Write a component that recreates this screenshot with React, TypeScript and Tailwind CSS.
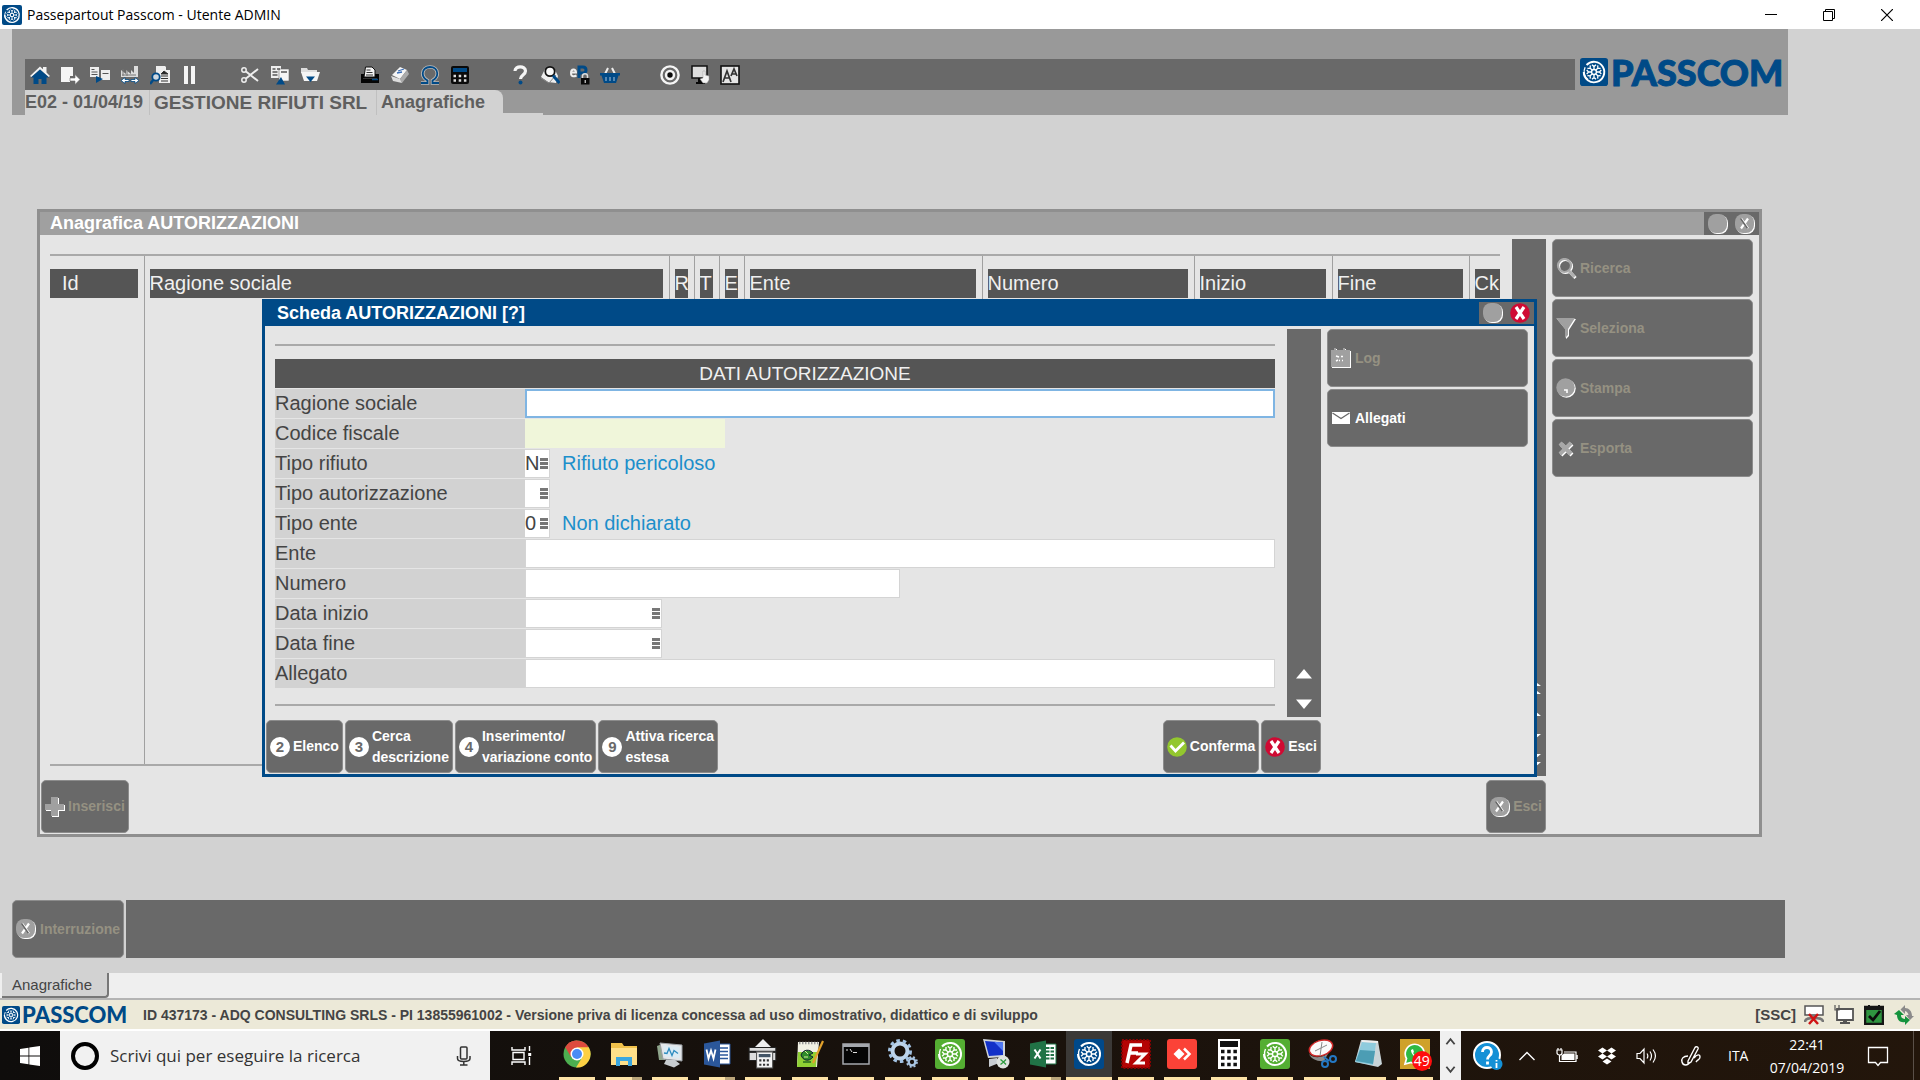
import React from "react";

type IconProps = { children: React.ReactNode; size?: number; className?: string; box?: string };

function Svg({ children, size = 20, className = "", box = "0 0 20 20" }: IconProps) {
  return (
    <svg width={size} height={size} viewBox={box} className={"shrink-0 " + className} aria-hidden="true" fill="none">
      {children}
    </svg>
  );
}

const BLUE = "#004a87";

function Wheel({ size, color = BLUE, radius = 3 }: { size: number; color?: string; radius?: number }) {
  const spokes = [0, 45, 90, 135, 180, 225, 270, 315];
  return (
    <Svg size={size} box="0 0 30 30">
      <rect width="30" height="30" rx={radius} fill={color} />
      <path d="M7 7.5A11 11 0 1 1 4 15" stroke="#fff" strokeWidth="2" />
      <path d="M5.500 10a10.500 10.500 0 0 0 3 13" stroke="#fff" strokeWidth="1.400" />
      <circle cx="15" cy="15" r="2.600" stroke="#fff" strokeWidth="1.500" />
      {spokes.map((a) => (
        <g key={a} transform={`rotate(${a} 15 15)`}>
          <path d="M15 12V8.500M12.800 7.200L15 9.200L17.200 7.200" stroke="#fff" strokeWidth="1.400" />
        </g>
      ))}
    </Svg>
  );
}

/* ---------- toolbar ---------- */

const toolbar: ([string, React.ReactNode] | null)[] = [
  ["Home", <><path d="M0 11L10 1.500L13 4.300V2h3.500v5.500L20 11l-1.500 1L10 4.500L1.500 12z" fill="#f2f2f2" /><path d="M10 4.500L1 12.500h2.500V19h5v-5h3v5h5v-6.500H19z" fill={BLUE} /></>],
  ["Esci", <><path d="M1 2h12v9h-3v6H1z" fill="#f5f5f5" /><path d="M10 13h5V9.500l5 5-5 5V16h-5z" fill="#fff" stroke="#696969" strokeWidth=".6" /></>],
  ["Copia", <><path d="M0 2h9v10H0z" fill="#eee" /><path d="M11 5h9v10h-9z" fill="#eee" /><path d="M1.500 4.500h3M1.500 7h6M1.500 9.500h6M12.500 8.500h6" stroke="#555" /><path d="M6 11l7 3-7 4z" fill={BLUE} /></>],
  ["Azienda", <><path d="M1 12V5l5 4V5l5 4V5l3 3V1h4v11z" fill="#ddd" /><path d="M2 10h14M3 4v7M7 5v6" stroke="#777" /><path d="M1 15.500l4-3v2h4v2H5v2zM19 15.500l-4-3v2h-4v2h4v2z" fill="#fff" stroke={BLUE} strokeWidth=".8" /></>],
  ["Cerca documento", <><path d="M6 1h9l1 1v3h4v13H9V15H6z" fill="#eee" /><path d="M11 9l3-3 4 3zM11 11h7M11 13.500h7M11 16h7" stroke="#333" fill="#222" /><circle cx="6" cy="12" r="3.700" stroke={BLUE} strokeWidth="1.800" fill="#cfd8e0" /><path d="M3.500 14.500L0 19" stroke={BLUE} strokeWidth="2.500" /></>],
  ["Pausa", <path d="M4 1h4v18H4zM11 1h4v18h-4z" fill="#f5f5f5" />],
  null,
  ["Taglia", <><circle cx="4" cy="5" r="2.200" stroke="#eee" strokeWidth="1.500" /><circle cx="4" cy="15" r="2.200" stroke="#eee" strokeWidth="1.500" /><path d="M6 6.500L18 16M6 13.500L18 4" stroke="#eee" strokeWidth="2" /></>],
  ["Copia tutto", <><path d="M1 1h10v12H1z" fill="#eee" /><path d="M9 4h10v12H9z" fill="#f5f5f5" stroke="#696969" strokeWidth=".6" /><path d="M2.500 4h3M7 4h3M2.500 7h5M2.500 10h5M11 7h6" stroke="#555" strokeWidth="1.300" /><path d="M6 19.500L11 12l4 7.500z" fill={BLUE} /></>],
  ["Apri", <><path d="M1 3h6l1 2h9v3H1z" fill="#ddd" /><path d="M1 7h19l-3 9H4z" fill="#f5f5f5" /><path d="M6 11.500h9L10.500 17z" fill={BLUE} /></>],
  null,
  ["Stampa", <><path d="M1 9h18v9H1z" fill="#050505" /><path d="M4 12L5.500 2H12l3 3v7z" fill="#f5f5f5" stroke="#111" /><path d="M6.500 5h4M6.500 7.500h6M6 10h7" stroke="#333" /><path d="M3 13.500h14" stroke="#333" /><path d="M12 14.500h6" stroke={BLUE} strokeWidth="1.500" /></>],
  ["Gomma", <><path d="M2 10L10 2l7 3-7 9z" fill="#f5f5f5" /><path d="M10 14l7-9 2 4-7 9z" fill="#aaa" /><path d="M1 11l9 3 2 4-9-2z" fill="#ddd" /><path d="M8 6l6-2M7 8l5-1" stroke="#3b6db5" strokeWidth="1.300" /></>],
  ["Simboli", <><path d="M1 18h6.500v-2.500C4 13.500 2.700 11.500 2.700 8.500C2.700 4.500 5.800 2 10 2s7.300 2.500 7.300 6.500c0 3-1.300 5-4.800 7V18H19" stroke="#fff" strokeWidth="3.600" opacity=".55" /><path d="M1 18h6.500v-2.500C4 13.500 2.700 11.500 2.700 8.500C2.700 4.500 5.800 2 10 2s7.300 2.500 7.300 6.500c0 3-1.300 5-4.800 7V18H19" stroke={BLUE} strokeWidth="1.800" /></>],
  ["Calcolatrice", <><rect x="1" y="1" width="18" height="18" rx="2" fill="#0a0a0a" /><path d="M3 3h14v4H3z" fill={BLUE} /><path d="M3.500 11h13M3.500 15.500h13" stroke="#ddd" strokeWidth="2.500" strokeDasharray="2.500 2.700" /></>],
  null,
  ["Aiuto", <><path d="M5 6C5 .500 15.500 .500 15.500 6c0 4-5 4-5 8" stroke="#f5f5f5" strokeWidth="3.200" /><circle cx="10.500" cy="17.500" r="2" fill={BLUE} /></>],
  ["Ricerca", <><path d="M1 12l4-8 10 1 3 6-2 7-8-1z" fill="#eee" /><path d="M1 13l8 5 7-8" stroke="#888" /><circle cx="10" cy="6.500" r="4.700" fill="#f8f8f8" stroke="#111" strokeWidth="1.800" /><path d="M13 10.500L19.500 18" stroke={BLUE} strokeWidth="3" /></>],
  ["ePass", <><path d="M1 7.500h5C6 3.500 1 3.500 1 8s3.500 3.500 5.500 2.500" stroke="#eee" strokeWidth="2" /><path d="M9 13V2h4c4 0 4 6 0 6h-3" stroke={BLUE} strokeWidth="3" /><path d="M12.500 13V11c0-3 5-3 5 0v2" stroke="#ddd" strokeWidth="1.500" /><path d="M11 13h8.500v6.500H11z" fill="#080808" /><path d="M15.200 15v3" stroke="#fff" /></>],
  ["Negozio", <><path d="M5 9l3-6M15 9l-3-6" stroke="#eee" strokeWidth="2" /><path d="M0 8h20v2.500h-1.500L16 18H4L1.500 10.500H0z" fill={BLUE} /><path d="M6 12v4M10 12v4M14 12v4" stroke="#aac4dd" /></>],
  null,
  ["Obiettivo", <><circle cx="10" cy="10" r="9.800" fill="#f5f5f5" /><circle cx="10" cy="10" r="6.300" fill="#f5f5f5" stroke="#696969" strokeWidth="2.200" /><circle cx="10" cy="10" r="2.700" fill="#0a0a0a" /></>],
  ["Schermo", <><path d="M2 1h15v12H2z" fill="#ddd" stroke="#111" strokeWidth="1.500" /><path d="M8 13h4v4h3v2H6v-2h2z" fill="#080808" /><path d="M13 6h2v4l4 1v4l-2 3h-4l-3-4 3-1z" fill="#f5f5f5" stroke="#999" strokeWidth=".5" /></>],
  ["Carattere", <><rect x="1" y="1" width="18" height="18" fill="#e5e5e5" stroke="#111" strokeWidth="1.600" /><path d="M3 17L7 6l4 11M4.500 13h5M11 11l3-7 3 7M12 9h4" stroke="#333" strokeWidth="1.700" /></>],
];

/* ---------- program icons ---------- */

const dis = "drop-shadow-[1px_1px_0_#ffffff]";

function GreyDisc() {
  return <Svg className={dis}><rect width="19" height="19" rx="8" fill="#a0a0a0" /></Svg>;
}
function GreyX() {
  return (
    <Svg className={dis}>
      <rect width="19" height="19" rx="8" fill="#a0a0a0" />
      <path d="M6 4.500l7 10M13 4.500l-7 10" stroke="#fff" strokeWidth="2.200" />
      <path d="M5.500 4.500l7 10" stroke="#666" strokeWidth="1.600" />
    </Svg>
  );
}
function RedX() {
  return (
    <Svg>
      <circle cx="10" cy="10" r="9.800" fill="#cf0a33" />
      <path d="M6 4l8 12M14 4l-8 12" stroke="#fff" strokeWidth="3.200" />
    </Svg>
  );
}
function GreenCheck() {
  return (
    <Svg>
      <circle cx="10" cy="10" r="9.800" fill="#93c72e" />
      <path d="M3.500 8.500l5 5.500 8.500-8.500" stroke="#fff" strokeWidth="2.800" />
    </Svg>
  );
}
function NumberDisc({ n }: { n: string }) {
  return (
    <span className="flex size-5 shrink-0 items-center justify-center rounded-full bg-white text-[15px] leading-5 font-bold text-[#696969]">
      {n}
    </span>
  );
}
const MagIcon = () => <Svg className={dis}><circle cx="8.500" cy="7.500" r="6.500" stroke="#a8a8a8" strokeWidth="2.200" /><path d="M13 13l5.500 6" stroke="#b0b0b0" strokeWidth="3" /></Svg>;
const FunnelIcon = () => <Svg className={dis}><path d="M0 0h19l-7 11v6l-3 3V11z" fill="#a0a0a0" /></Svg>;
const PrintIcon = () => <Svg className={dis}><circle cx="9.500" cy="9.500" r="9.200" fill="#a0a0a0" /><path d="M8 12h3v3" stroke="#fff" strokeWidth="1.600" /></Svg>;
const ExportIcon = () => <Svg className={dis}><path d="M4 5l11 11M15 5L4 16" stroke="#a8a8a8" strokeWidth="4" /></Svg>;
const LogIcon = () => <Svg className={dis}><path d="M0 2h3V0h2v2h7V0h2v2h5v17H0z" fill="#a0a0a0" /><path d="M5 8l3 1M5 13l2-1M10 8.500h2M8 12.500h1M11 12.500h1" stroke="#fff" strokeWidth="1.500" /></Svg>;
const MailIcon = () => <Svg><path d="M1 4h18v12H1z" fill="#fff" /><path d="M1.500 5l8.500 5.500L18.500 5" stroke="#696969" strokeWidth="1.300" /></Svg>;
const PlusIcon = () => <Svg className={dis}><path d="M6 0h7v7h6v6h-6v6H6v-6H0V7h6z" fill="#a0a0a0" /></Svg>;

const btnBase = "flex items-center rounded-[5px] border border-[#8c8c8c] bg-[#696969] text-left text-sm leading-[21px] font-bold whitespace-nowrap ";

function SideButton({ icon, label, enabled = false }: { icon: React.ReactNode; label: string; enabled?: boolean }) {
  return (
    <button type="button" disabled={!enabled} className={btnBase + "h-[58px] w-full gap-1 px-[3px] " + (enabled ? "text-white" : "text-[#959182]")}>
      {icon}
      {label}
    </button>
  );
}

function FootButton({ icon, children, enabled = false }: { icon: React.ReactNode; children: React.ReactNode; enabled?: boolean }) {
  return (
    <button type="button" disabled={!enabled} className={btnBase + "h-[53px] shrink-0 gap-[3px] px-[3px] " + (enabled ? "text-white" : "text-[#959182]")}>
      {icon}
      <span>{children}</span>
    </button>
  );
}

/* ---------- list window ---------- */

const columns: { label: string; width: string; pad?: string }[] = [
  { label: "Id", width: "w-[94px]", pad: "mr-[6px] pl-3" },
  { label: "Ragione sociale", width: "" },
  { label: "R", width: "w-[25px]" },
  { label: "T", width: "w-[25px]" },
  { label: "E", width: "w-[25px]" },
  { label: "Ente", width: "w-[238px]" },
  { label: "Numero", width: "w-[212px]" },
  { label: "Inizio", width: "w-[138px]" },
  { label: "Fine", width: "w-[137px]" },
  { label: "Ck", width: "w-[31px]", pad: "ml-[5px]" },
];

function ListTable() {
  return (
    <table className="w-full table-fixed border-collapse border-y-2 border-[#a9a9a9]">
      <thead>
        <tr>
          {columns.map((c) => (
            <th key={c.label} scope="col" className={"border-r border-[#a0a0a0] p-0 pt-[13px] text-left text-xl font-normal text-[#f0f0f0] last:border-r-0 " + c.width}>
              <div className={"h-[29px] overflow-hidden bg-[#555555] leading-[29px] whitespace-nowrap " + (c.pad ?? "mr-[6px] ml-[5px]")}>{c.label}</div>
            </th>
          ))}
        </tr>
      </thead>
      <tbody>
        <tr className="h-[467px]">
          {columns.map((c) => (
            <td key={c.label} className="border-r border-[#a0a0a0] last:border-r-0" />
          ))}
        </tr>
      </tbody>
    </table>
  );
}

function ListWindow() {
  return (
    <section className="relative mt-[94px] mr-[158px] ml-[37px] border-[3px] border-[#8f8f8f] bg-[#e5e5e5]">
      <header className="flex h-[23px] items-center justify-between bg-[#a0a0a0] pl-[10px]">
        <h1 className="text-lg leading-[23px] font-bold text-white">Anagrafica AUTORIZZAZIONI</h1>
        <div className="flex h-[23px] w-[55px] items-center justify-around bg-[#696969]">
          <button type="button" aria-label="Informazioni" disabled><GreyDisc /></button>
          <button type="button" aria-label="Chiudi" disabled><GreyX /></button>
        </div>
      </header>
      <div className="flex pt-1 pr-[6px]">
        <div className="min-w-0 flex-1">
          <div className="flex">
            <div className="min-w-0 flex-1 pt-[15px] pr-3 pl-[10px]"><ListTable /></div>
            <div className="flex h-[537px] w-[34px] flex-col items-center justify-end bg-[#696969] pb-2">
              <svg width="24" height="88" viewBox="0 0 24 88" fill="#ffffff" aria-hidden="true">
                <path d="M0 6L12-3L24 6zM0 14L12 5L24 14zM0 36L12 26L24 36zM0 54h24L12 64zM0 74h24L12 84zM0 82h24L12 92z" />
              </svg>
            </div>
          </div>
          <div className="flex justify-between pt-1 pb-px pl-px">
            <FootButton icon={<PlusIcon />}>Inserisci</FootButton>
            <FootButton icon={<GreyX />}>Esci</FootButton>
          </div>
        </div>
        <aside className="ml-[6px] flex w-[201px] shrink-0 flex-col gap-[2px]">
          <SideButton icon={<MagIcon />} label="Ricerca" />
          <SideButton icon={<FunnelIcon />} label="Seleziona" />
          <SideButton icon={<PrintIcon />} label="Stampa" />
          <SideButton icon={<ExportIcon />} label="Esporta" />
        </aside>
      </div>
      <Dialog />
    </section>
  );
}

/* ---------- dialog ---------- */

function Lookup({ label }: { label: string }) {
  return (
    <button type="button" aria-label={label} className="mr-px flex h-full w-2 flex-col justify-center gap-px">
      <span className="h-[3px] w-2 bg-[#777777]" />
      <span className="h-[3px] w-2 bg-[#777777]" />
      <span className="h-[3px] w-2 bg-[#777777]" />
    </button>
  );
}

type Field = { id: string; label: string; kind: "full" | "focus" | "code" | "tax" | "half" | "date"; value?: string; note?: string };

const fields: Field[] = [
  { id: "ragione", label: "Ragione sociale", kind: "focus" },
  { id: "cf", label: "Codice fiscale", kind: "tax" },
  { id: "rifiuto", label: "Tipo rifiuto", kind: "code", value: "N", note: "Rifiuto pericoloso" },
  { id: "autorizzazione", label: "Tipo autorizzazione", kind: "code" },
  { id: "tipoente", label: "Tipo ente", kind: "code", value: "0", note: "Non dichiarato" },
  { id: "ente", label: "Ente", kind: "full" },
  { id: "numero", label: "Numero", kind: "half" },
  { id: "inizio", label: "Data inizio", kind: "date" },
  { id: "fine", label: "Data fine", kind: "date" },
  { id: "allegato", label: "Allegato", kind: "full" },
];

const boxStyle = {
  focus: "w-full border-2 border-[#7fb5e3] bg-white",
  full: "w-full border border-[#d4d4d4] bg-white",
  half: "w-1/2 border border-[#d4d4d4] bg-white",
  tax: "w-[200px] bg-[#f0f6da]",
  code: "w-[25px] border border-l-0 border-[#d4d4d4] bg-white",
  date: "w-[137px] border border-[#d4d4d4] bg-white",
};

function FormRow({ f }: { f: Field }) {
  const lookup = f.kind === "code" || f.kind === "date";
  return (
    <div className="mt-px flex h-[29px]">
      <label htmlFor={f.id} className="w-[250px] shrink-0 bg-[#d2d2d2] leading-[29px] text-[#444444]">{f.label}</label>
      <div className="flex min-w-0 flex-1">
        <div className={"flex h-full overflow-hidden " + boxStyle[f.kind]}>
          <input id={f.id} type="text" defaultValue={f.value} className="h-full min-w-0 flex-1 text-[#444444] outline-none" />
          {lookup && <Lookup label={"Elenco " + f.label} />}
        </div>
        {f.note && <span className="ml-3 leading-[29px] text-[#1c8fcb]">{f.note}</span>}
      </div>
    </div>
  );
}

function Dialog() {
  return (
    <section role="dialog" aria-label="Scheda AUTORIZZAZIONI" className="absolute top-[87px] right-[222px] left-[222px] border-[3px] border-[#004a87] bg-[#e5e5e5]">
      <header className="flex h-6 items-start justify-between bg-[#004a87] pl-3">
        <h2 className="text-lg leading-[22px] font-bold text-white">Scheda AUTORIZZAZIONI [?]</h2>
        <div className="flex h-[22px] w-[55px] items-center justify-around bg-[#696969]">
          <button type="button" aria-label="Informazioni"><GreyDisc /></button>
          <button type="button" aria-label="Chiudi scheda"><RedX /></button>
        </div>
      </header>
      <div className="flex pt-[3px] pr-[6px]">
        <div className="min-w-0 flex-1">
          <div className="flex">
            <form className="min-w-0 flex-1 pt-[15px] pr-3 pl-[10px] text-xl" onSubmit={(e) => e.preventDefault()}>
              <div className="border-y-2 border-[#a9a9a9] pt-[13px] pb-4">
                <h3 className="h-[29px] bg-[#555555] pl-[60px] text-center text-[19px] leading-[29px] text-[#f0f0f0]">DATI AUTORIZZAZIONE</h3>
                {fields.map((f) => <FormRow key={f.id} f={f} />)}
              </div>
            </form>
            <div className="flex h-[388px] w-[34px] flex-col items-center justify-end gap-5 bg-[#696969] pb-2">
              <button type="button" aria-label="Scorri su"><svg width="16" height="10" viewBox="0 0 16 10"><path d="M0 9.500L8 0l8 9.500z" fill="#fff" /></svg></button>
              <button type="button" aria-label="Scorri giù"><svg width="16" height="10" viewBox="0 0 16 10"><path d="M0 .500L8 10l8-9.500z" fill="#fff" /></svg></button>
            </div>
          </div>
          <div className="flex gap-[2px] pt-[3px] pb-px pl-px">
            <FootButton enabled icon={<NumberDisc n="2" />}>Elenco</FootButton>
            <FootButton enabled icon={<NumberDisc n="3" />}>Cerca<br />descrizione</FootButton>
            <FootButton enabled icon={<NumberDisc n="4" />}>Inserimento/<br />variazione conto</FootButton>
            <FootButton enabled icon={<NumberDisc n="9" />}>Attiva ricerca<br />estesa</FootButton>
            <div className="flex-1" />
            <FootButton enabled icon={<GreenCheck />}>Conferma</FootButton>
            <FootButton enabled icon={<RedX />}>Esci</FootButton>
          </div>
        </div>
        <aside className="ml-[6px] flex w-[201px] shrink-0 flex-col gap-[2px]">
          <SideButton icon={<LogIcon />} label="Log" />
          <SideButton icon={<MailIcon />} label="Allegati" enabled />
        </aside>
      </div>
    </section>
  );
}

/* ---------- taskbar ---------- */

type TaskApp = { name: string; icon: React.ReactNode; active?: boolean; multi?: boolean };

const apps: TaskApp[] = [
  { name: "Chrome", icon: <Svg size={28} box="0 0 28 28"><circle cx="14" cy="14" r="13.500" fill="#4caf50" /><path d="M2.300 7.300A13.500 13.500 0 0 1 25.700 7.300L14 14z" fill="#dd4b3e" /><path d="M2.300 7.300A13.500 13.500 0 0 1 14 .500v8L8 17z" fill="#dd4b3e" /><path d="M25.700 7.300H14L19.500 17L13 27.500A13.500 13.500 0 0 0 25.700 7.300z" fill="#fdd043" /><circle cx="14" cy="14" r="6.500" fill="#fff" /><circle cx="14" cy="14" r="5" fill="#4a8cf5" /></Svg> },
  { name: "Esplora file", multi: true, icon: <Svg size={28} box="0 0 28 28"><path d="M1 3h11l2 3h13v19H1z" fill="#f0c14b" /><path d="M1 8h26v17H1z" fill="#ffe08a" /><path d="M6 26v-9h16v9h-4v-5h-8v5z" fill="#3ba7e0" /></Svg> },
  { name: "Gestione attività", icon: <Svg size={28} box="0 0 28 28"><path d="M1 6l8-3v17H3z" fill="#8fa58c" /><path d="M4 3l22 2v16L7 19z" fill="#e3e6e9" stroke="#9a9fa4" /><path d="M7 5.500l16.500 1.500v11L9 16.500z" fill="#dcebf4" /><path d="M8 13l3 .500 2-5 3 7 2-5 4 3" stroke="#2e8cc0" strokeWidth="1.300" /><path d="M10 20h9l5 4-6 3.500-10-3.500z" fill="#c8ccd0" /></Svg> },
  { name: "Word", multi: true, icon: <Svg size={28} box="0 0 28 28"><path d="M14 4h13v20H14z" fill="#fff" stroke="#2b579a" /><path d="M16 8h9M16 11.500h9M16 15h9M16 18.500h9" stroke="#2b579a" strokeWidth="1.600" /><path d="M1 3.500L17 .500v27L1 24.500z" fill="#2b579a" /><path d="M3.500 9.500l2 9 2.500-8 2.500 8 2-9" stroke="#fff" strokeWidth="1.800" /></Svg> },
  { name: "Fax", icon: <Svg size={30} box="0 0 28 28"><path d="M6 8l8-8 8 8z" fill="#eee" stroke="#777" strokeWidth=".6" /><path d="M1 8h25v12H1z" fill="#ddd" stroke="#222" /><path d="M1 12h25" stroke="#222" strokeWidth="2" /><path d="M8 12h15v15H8z" fill="#f4f4f4" stroke="#555" /><path d="M10 14h11v3H10z" fill="#456" /><path d="M10.500 20h10M10.500 24h10" stroke="#333" strokeWidth="2" strokeDasharray="2 1.500" /></Svg> },
  { name: "Notepad++", icon: <Svg size={28} box="0 0 28 28"><path d="M2 2h21l-2 25H1z" fill="#f1f1e4" /><path d="M2 12h19l-1 15H1z" fill="#8fd033" /><path d="M3 3h19" stroke="#999" strokeWidth="2.500" strokeDasharray="1.500 1.500" /><path d="M5 15c2-6 9-6 12-2l-4 2 4 2c-4 5-10 4-12-2z" fill="#2e8b2a" stroke="#123" /><path d="M9 11l3 3M8 17h4" stroke="#d8f0a0" /><path d="M7 22h8" stroke="#246b1e" strokeWidth="1.500" /><path d="M27 1L17 23" stroke="#e2a12b" strokeWidth="2.200" /></Svg> },
  { name: "Prompt dei comandi", icon: <Svg size={28} box="0 0 28 28"><path d="M1 4h26v20H1z" fill="#050505" stroke="#a5a8ad" strokeWidth="1.500" /><path d="M1 4h26v3H1z" fill="#a5a8ad" /><path d="M4 10h2M8 9l2 3M11 12.500h4" stroke="#ddd" /></Svg> },
  { name: "Servizi", icon: <Svg size={30} box="0 0 30 30"><circle cx="12" cy="12" r="7.500" stroke="#bcd3ea" strokeWidth="4" /><circle cx="12" cy="12" r="10.500" stroke="#a3c3e3" strokeWidth="3" strokeDasharray="3.500 3" /><circle cx="24" cy="23" r="3.300" stroke="#a9c5e2" strokeWidth="2.300" /><circle cx="24" cy="23" r="5" stroke="#a9c5e2" strokeWidth="1.700" strokeDasharray="2 2" /></Svg> },
  { name: "Passepartout", icon: <Wheel size={30} color="#54ae32" /> },
  { name: "Desktop remoto", icon: <Svg size={30} box="0 0 30 30"><path d="M2 0l22 2v16l-17 1z" fill="#cfd4da" /><path d="M4 2l18 1.500V16L8 17z" fill="#1230c8" /><path d="M13 2.700l9 .800V12z" fill="#4f78f5" /><path d="M8 20l8-1 2 5-10 4z" fill="#c9cdd2" /><circle cx="22" cy="23" r="6.500" fill="#dfe3df" /><path d="M19.500 20.500l3 2.500-3 2.500M25 20.500L22.500 23l2.500 2.500" stroke="#2c9a3c" strokeWidth="1.300" /></Svg> },
  { name: "Excel", multi: true, icon: <Svg size={28} box="0 0 28 28"><path d="M14 4h13v20H14z" fill="#fff" stroke="#217346" /><path d="M17 8h8M17 11.500h8M17 15h8M17 18.500h8" stroke="#217346" strokeWidth="1.800" strokeDasharray="3.500 1" /><path d="M1 3.500L17 .500v27L1 24.500z" fill="#217346" /><path d="M5.500 9.500l6 9M11.500 9.500l-6 9" stroke="#fff" strokeWidth="2" /></Svg> },
  { name: "Passcom", active: true, icon: <Wheel size={30} color="#00498a" /> },
  { name: "FileZilla", icon: <Svg size={30} box="0 0 30 30"><rect x="1" y="1" width="28" height="28" fill="#b40404" stroke="#8a0000" strokeDasharray="2 1.500" strokeWidth="2" /><path d="M6 24L10 6h11M8 14h9" stroke="#fff" strokeWidth="3.500" /><path d="M15 15h9l-9 9h9" stroke="#fff" strokeWidth="3" /></Svg> },
  { name: "AnyDesk", icon: <Svg size={30} box="0 0 30 30"><rect width="30" height="30" rx="3" fill="#fb4237" /><path d="M12 9.500l5.500 5.500-5.500 5.500L6.500 15z" fill="#fff" /><path d="M17 9.500l5.500 5.500-5.500 5.500" stroke="#fff" strokeWidth="2.500" /></Svg> },
  { name: "Calcolatrice", icon: <Svg size={30} box="0 0 30 30"><path d="M4 0h22v30H4z" fill="#fff" /><path d="M6 2h18v6H6z" fill="#111" /><path d="M7 12.500h16M7 19h16M7 25.500h16" stroke="#111" strokeWidth="3.500" strokeDasharray="3.500 2.700" /></Svg> },
  { name: "Passepartout 2", icon: <Wheel size={30} color="#54ae32" /> },
  { name: "Strumento di cattura", icon: <Svg size={30} box="0 0 30 30"><path d="M2 15c5 5 15 4 20-2l-5 9c-6 1-13-2-15-7z" fill="#8b8b8b" /><ellipse cx="14" cy="9" rx="12" ry="7.500" transform="rotate(-18 14 9)" fill="#fafafa" stroke="#d02929" strokeWidth="1.500" /><path d="M15 3l-2 14M8 12l12-6" stroke="#888" /><circle cx="18" cy="25" r="3" stroke="#2478c4" strokeWidth="2" /><circle cx="26" cy="20" r="3" stroke="#2478c4" strokeWidth="2" /><path d="M17 18l5 4" stroke="#2478c4" strokeWidth="2" /></Svg> },
  { name: "Blocco note", icon: <Svg size={30} box="0 0 30 30"><path d="M8 1l17 1 4 23-4 3-23-5z" fill="#c9d4d8" /><path d="M9 3l14 1-3 22-18-3z" fill="#8ecbdd" /><path d="M7 11l15 1-2 13-17-3z" fill="#4c9db4" /><path d="M9 2l16 1" stroke="#eee" strokeWidth="2" /></Svg> },
  { name: "WhatsApp", icon: <span className="relative flex size-[30px] items-center justify-center bg-[#cfa12a]"><Svg size={24} box="0 0 24 24"><path d="M2 22l1.500-5.500A9.500 9.500 0 1 1 8 20.500z" fill="#2fb943" stroke="#fff" strokeWidth="1.700" /><path d="M8 8c0 4 4 8 8 8l1-2-3-1-1 1c-2-1-2-2-3-3l1-1-1-3z" fill="#fff" /></Svg><span className="absolute top-3 left-3 flex size-5 items-center justify-center rounded-full bg-[#ff0d0d] text-sm leading-5 text-white">49</span></span> },
];

const segoe = "font-['Segoe_UI','Open_Sans',sans-serif]";

function Taskbar() {
  return (
    <footer className={"flex h-[49px] shrink-0 bg-gradient-to-r from-[#0f0d0c] to-[#23160b] text-white " + segoe}>
      <button type="button" aria-label="Start" className="flex w-[60px] items-center justify-center">
        <Svg size={20}><path d="M0 3l8.500-1.300V9.500H0zM9.300 1.600L20 0v9.500H9.300zM0 10.400h8.500v7.900L0 17zM9.300 10.400H20V20l-10.700-1.600z" fill="#fff" /></Svg>
      </button>
      <div className="flex w-[430px] items-center bg-[#f1f1f1] pr-4 pl-[11px]">
        <span className="size-[28px] shrink-0 rounded-full border-[4px] border-black" />
        <input aria-label="Ricerca" placeholder="Scrivi qui per eseguire la ricerca" className="ml-[11px] min-w-0 flex-1 text-[17px] text-[#333333] outline-none placeholder:text-[#333333]" />
        <button type="button" aria-label="Microfono"><Svg size={20}><rect x="6.500" y="1" width="6.500" height="12" rx="1" stroke="#333" strokeWidth="1.500" /><path d="M3.500 10v2.500c0 4 12.500 4 12.500 0V10M9.800 15.500V19M6 19h7.500" stroke="#333" strokeWidth="1.500" /></Svg></button>
      </div>
      <button type="button" aria-label="Visualizzazione attività" className="flex w-[64px] items-center justify-center">
        <Svg size={22} box="0 0 22 22"><path d="M1 2v3h13V2M2 7.500h11v7H2zM1 20v-3h13v3M18.500 1v5M18.500 12v8" stroke="#fff" strokeWidth="1.400" /><path d="M17.200 8h3v3h-3z" fill="#fff" /></Svg>
      </button>
      <div className="flex min-w-0 flex-1">
        {apps.map((a) => (
          <button key={a.name} type="button" aria-label={a.name} className={"flex flex-1 flex-col items-center " + (a.active ? "bg-[#3b3937]" : "")}>
            <span className="flex flex-1 items-center">{a.icon}</span>
            <span className={"flex h-[3px] bg-[#fde3a7] " + (a.active ? "w-full" : "w-9 justify-end")}>
              {a.multi && <span className="w-[10px] bg-[#bba67b]" />}
            </span>
          </button>
        ))}
      </div>
      <div className="ml-[2px] flex w-[21px] flex-col items-center justify-between bg-[#f0f0f0] py-[5px]">
        <Svg size={11} box="0 0 12 12"><path d="M1.500 9L6 3.500 10.500 9" stroke="#444" strokeWidth="2" /></Svg>
        <Svg size={11} box="0 0 12 12"><path d="M1.500 3L6 8.500 10.500 3" stroke="#444" strokeWidth="2" /></Svg>
      </div>
      <div className="flex w-[459px] shrink-0 items-center pl-3">
        <Svg size={30} box="0 0 30 30"><circle cx="14" cy="14" r="13" fill="#1490d6" stroke="#fff" strokeWidth="2" /><path d="M9.500 11c0-6 9-6 9 0 0 4-4 3.500-4 7.500M14.500 20.500v3" stroke="#fff" strokeWidth="2.800" /><circle cx="23.500" cy="23" r="6" fill="#1490d6" /><path d="M23.500 19v1.500M23.500 22v5" stroke="#fff" strokeWidth="1.800" /></Svg>
        <Svg size={18} className="ml-[15px]" box="0 0 18 18"><path d="M1.500 13L9 5.500l7.500 7.500" stroke="#fff" strokeWidth="1.400" /></Svg>
        <Svg size={22} className="ml-[20px]" box="0 0 22 22"><path d="M1 5h5v3c0 1-1 2-2.500 2S1 9 1 8zM2 3v2M5 3v2M3.500 10v6.500H20V7H8" stroke="#fff" strokeWidth="1.200" /><path d="M5.500 10.500L8 8.500h10.500V15h-13z" fill="#fff" /><path d="M21 10v4" stroke="#fff" strokeWidth="1.500" /></Svg>
        <Svg size={20} className="ml-[19px]"><path d="M5.500 1.500L10 4.500 5.500 7.500 1 4.500zM14.500 1.500L19 4.500l-4.500 3L10 4.500zM5.500 7.500L10 10.500 5.500 13.500 1 10.500zM14.500 7.500l4.500 3-4.500 3L10 10.500zM10 12.500l4.500 3L10 18.500l-4.500-3z" fill="#fff" /></Svg>
        <Svg size={22} className="ml-[19px]" box="0 0 22 22"><path d="M1 8.500h3L8 4v14l-4-4.500H1zM11 8.500c1 1.500 1 3.500 0 5M14 6.500c2 3 2 6 0 9M17 4.500c3 4 3 9 0 13" stroke="#fff" strokeWidth="1.200" /></Svg>
        <Svg size={24} className="ml-[22px]" box="0 0 24 24"><path d="M8 17L15 3.500c1-1.500 4-.500 3 1.500L11 18l-3 2zM8 12c-5 0-7 3-6 6 1 4 6 4 8 0M14 14c3-4 6-4 6-1s-2 2-4 5" stroke="#fff" strokeWidth="1.400" /></Svg>
        <span className="ml-[24px] w-[26px] text-sm leading-5">ITA</span>
        <div className="ml-2 w-[90px] text-center text-sm leading-[23px]"><div>22:41</div><div>07/04/2019</div></div>
        <Svg size={22} className="ml-[15px]" box="0 0 22 22"><path d="M1.500 2.500h19v15h-7l-2.500 3-2.500-3h-7z" stroke="#fff" strokeWidth="1.300" /></Svg>
        <span className="ml-6 h-full w-px bg-[#5a5048]" />
      </div>
    </footer>
  );
}

/* ---------- page ---------- */

export default function App() {
  return (
    <div className="flex min-h-screen flex-col bg-[#d2d2d2] font-['Liberation_Sans',Arial,sans-serif]">
      <div className={"flex h-[29px] items-center bg-white pr-1 pl-[2px] text-black " + segoe}>
        <Wheel size={20} />
        <span className="ml-[5px] flex-1 text-sm leading-[29px]">Passepartout Passcom - Utente ADMIN</span>
        <button type="button" aria-label="Riduci a icona" className="flex w-[58px] justify-center"><Svg size={12} box="0 0 12 12"><path d="M0 5.500h12" stroke="#000" /></Svg></button>
        <button type="button" aria-label="Ripristina" className="flex w-[58px] justify-center"><Svg size={12} box="0 0 12 12"><path d="M.500 2.500h9v9h-9zM2.500 2.500v-2h9v9h-2" stroke="#000" /></Svg></button>
        <button type="button" aria-label="Chiudi finestra" className="flex w-[58px] justify-center"><Svg size={12} box="0 0 12 12"><path d="M0 0l12 12M12 0L0 12" stroke="#000" strokeWidth="1.200" /></Svg></button>
      </div>

      <header className="mr-[132px] ml-3 bg-[#999999] pt-7">
        <div className="flex h-[33px] items-end">
          <div className="ml-[13px] flex h-[31px] flex-1 items-center bg-[#696969]">
            {toolbar.map((t, i) =>
              t === null ? (
                <span key={i} className="w-[30px]" />
              ) : (
                <button key={i} type="button" aria-label={t[0]} className="flex w-[30px] justify-center">
                  <Svg>{t[1]}</Svg>
                </button>
              ),
            )}
          </div>
          <div className="flex h-[30px] w-[213px] items-center gap-[3px] self-start pl-[5px]">
            <Wheel size={28} />
            <span className="font-['Lato',sans-serif] text-[36px] leading-[30px] font-black text-[#004a87] [-webkit-text-stroke:1px_#004a87]">PASSCOM</span>
          </div>
        </div>
        <div className="ml-[13px] flex h-[25px] items-end">
          <nav className="flex h-[25px] w-[478px] rounded-tr-lg bg-[#d2d2d2] text-lg leading-[25px] font-bold whitespace-nowrap text-[#5f5f5f]">
            <span className="w-[125px] border-r border-[#c0c0c0]">E02 - 01/04/19</span>
            <span className="w-[227px] border-r border-[#c0c0c0] pl-1 text-[19px]">GESTIONE RIFIUTI SRL</span>
            <span className="pl-1">Anagrafiche</span>
          </nav>
          <span className="h-[2px] w-10 bg-[#d2d2d2]" />
        </div>
      </header>

      <main className="flex flex-1 flex-col">
        <ListWindow />
        <div className="mt-[63px] mr-[135px] mb-[15px] ml-3 flex gap-[2px]">
          <button type="button" disabled className={btnBase + "h-[58px] gap-1 px-[3px] text-[#959182]"}>
            <GreyX />
            Interruzione
          </button>
          <div className="h-[58px] flex-1 bg-[#696969]" />
        </div>
      </main>

      <div className="flex h-[25px] bg-[#efefef] pl-[2px]">
        <button type="button" className="h-[25px] w-[107px] rounded-br border-r-2 border-b-2 border-[#777777] bg-[#d2d2d2] pl-[10px] text-left text-[15px] leading-5 text-[#444444]">Anagrafiche</button>
      </div>
      <div className="flex h-[33px] items-center border-t-2 border-b-2 border-t-[#b4b4b4] border-b-white bg-[#ece9d8] pr-[6px] pl-[2px] font-bold text-[#444444]">
        <Wheel size={18} />
        <span className="ml-[2px] w-[121px] font-['Lato',sans-serif] text-[22px] leading-7 font-black text-[#004a87]">PASSCOM</span>
        <span className="flex-1 text-sm leading-7">ID 437173 - ADQ CONSULTING SRLS - PI 13855961002 - Versione priva di licenza concessa ad uso dimostrativo, didattico e di sviluppo</span>
        <span className="mr-2 text-[15px] leading-7">[SSC]</span>
        <div className="flex gap-[10px]">
          <Svg><path d="M1 1h18v9H1z" fill="#fff" stroke="#555" strokeWidth="1.500" /><path d="M10 10v4M1 17c0-4 5-4 9-4s9 0 9 4" stroke="#777" strokeWidth="2.500" /><path d="M5 9l9 10M14 9L5 19" stroke="#d01414" strokeWidth="2.500" /></Svg>
          <Svg><path d="M3 4h16v11H3z" fill="#fff" stroke="#555" strokeWidth="1.800" /><path d="M1 0v5h4V0" stroke="#555" strokeWidth="1.200" /><path d="M9 15h4v2h3v2H6v-2h3z" fill="#555" /></Svg>
          <Svg><path d="M1 2h18v17H1z" fill="#2f9440" stroke="#151515" strokeWidth="2.500" /><path d="M1 3h18" stroke="#151515" strokeWidth="4" /><path d="M5 0v3M15 0v3" stroke="#151515" strokeWidth="2" /><path d="M5 11l4 4 7-9" stroke="#0b0b0b" strokeWidth="2.800" /></Svg>
          <Svg><path d="M0 9l5-4 5 5H7c0 3 2 4 4 4v-3l5 4-5 5v-3C6 18 3 15 3 10z" fill="#14933d" /><path d="M20 11l-4 4-4-5h2.500C14 8 13 6.500 11 6v3L6.500 4.500 11 0v3c4 0 7 3 7 8z" fill="#8a8a8a" /></Svg>
        </div>
      </div>
      <Taskbar />
    </div>
  );
}
